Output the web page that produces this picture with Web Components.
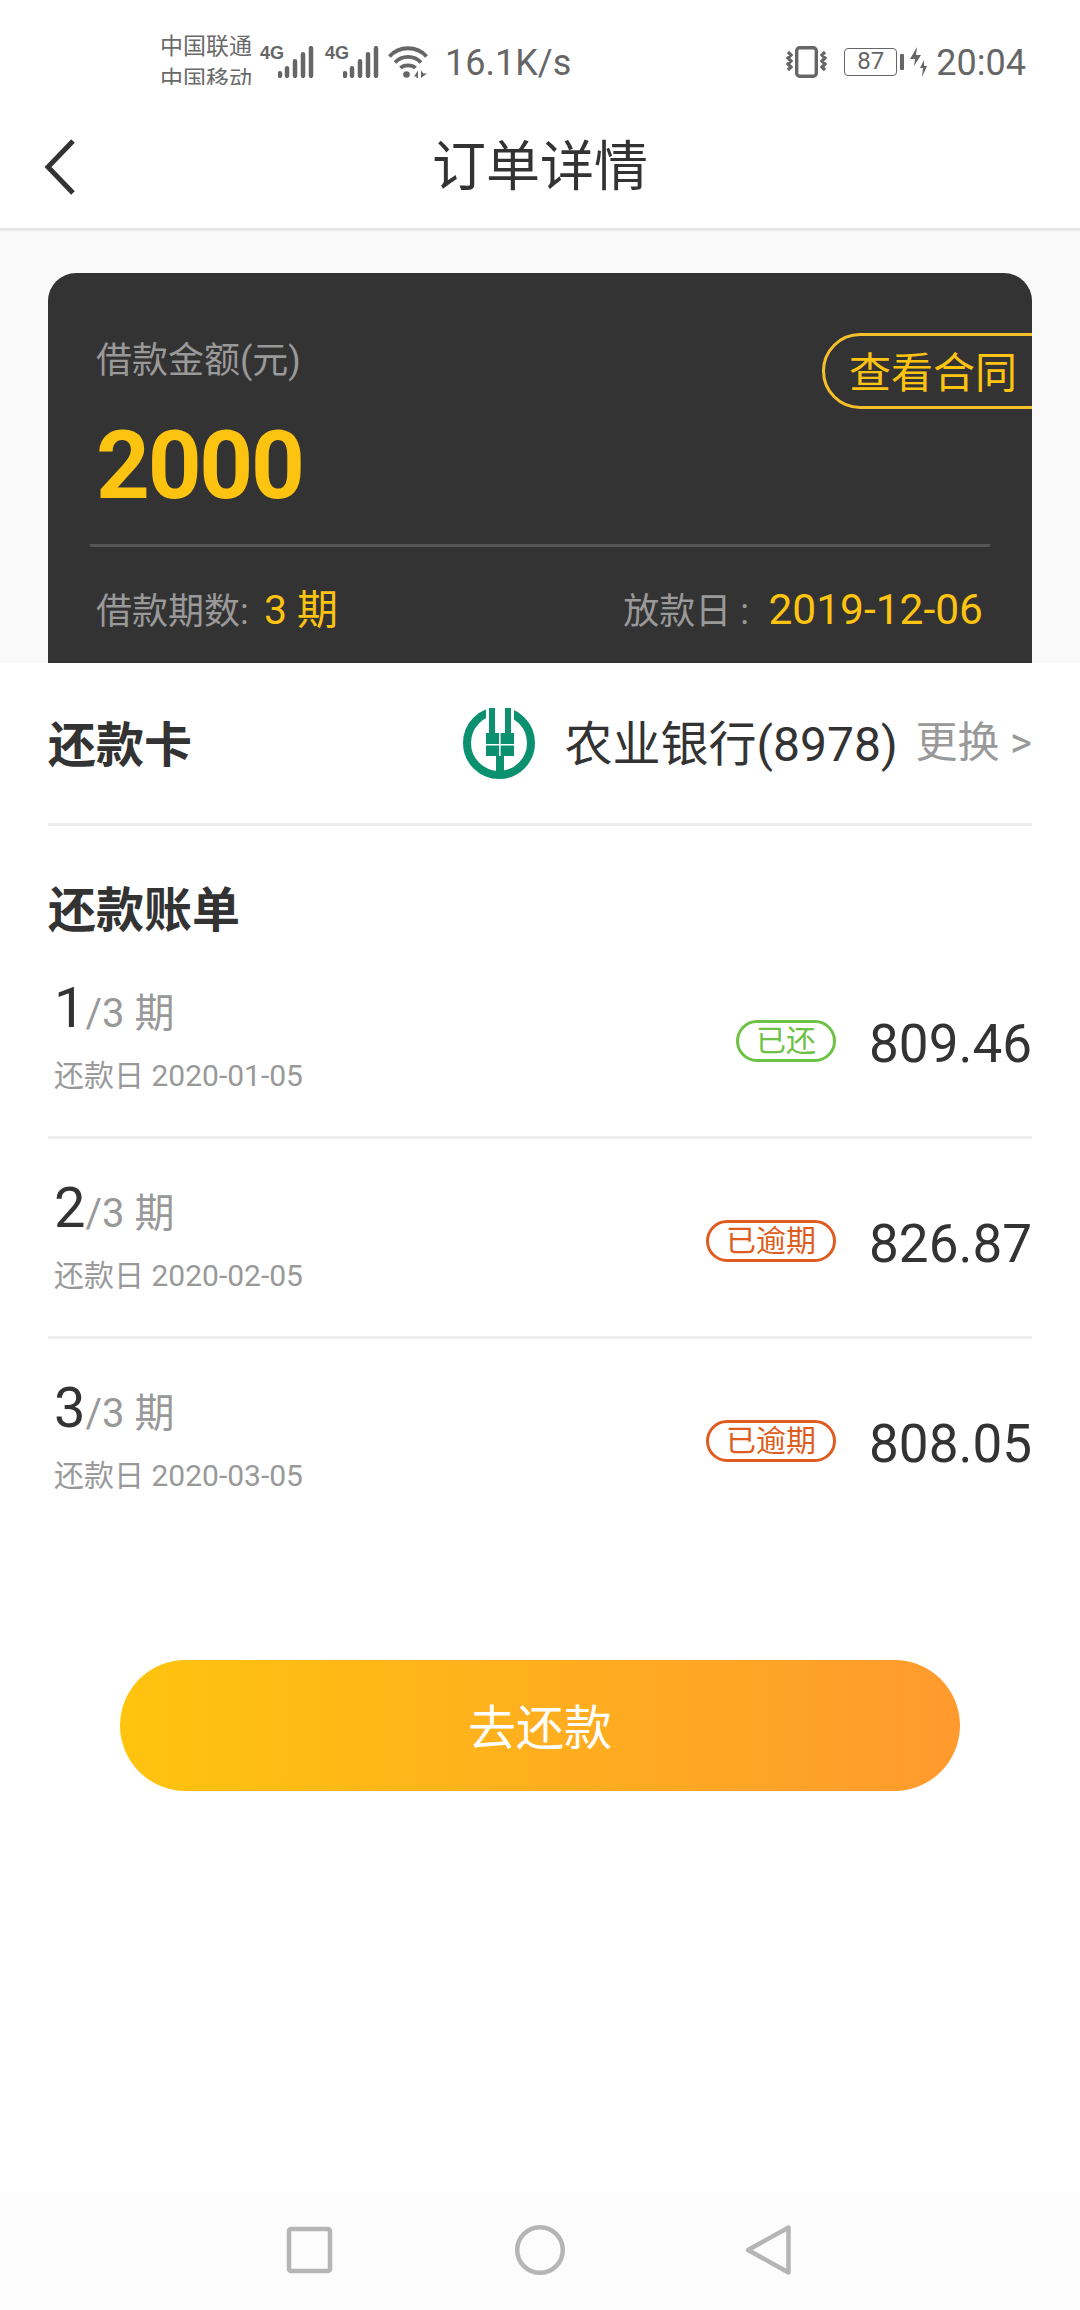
<!DOCTYPE html>
<html lang="zh"><head><meta charset="utf-8">
<style>
html,body{margin:0;padding:0;height:2310px;overflow:hidden;background:#fff}
body{font-family:Roboto,"Noto Sans CJK SC",sans-serif}
</style></head><body>
<x-app>
  <x-status-bar slot="top"></x-status-bar>
  <x-nav-bar title="订单详情"></x-nav-bar>
  <x-loan-card></x-loan-card>
  <x-sheet>
    <x-card-row></x-card-row>
    <x-section-title>还款账单</x-section-title>
    <x-bill-row n="1" date="2020-01-05" status="已还" tone="green" amount="809.46"></x-bill-row>
    <x-bill-row n="2" date="2020-02-05" status="已逾期" tone="red" amount="826.87"></x-bill-row>
    <x-bill-row n="3" date="2020-03-05" status="已逾期" tone="red" amount="808.05" last></x-bill-row>
    <x-pay-button>去还款</x-pay-button>
  </x-sheet>
  <x-sys-nav></x-sys-nav>
</x-app>
<script>
const def=(name,css,html)=>customElements.define(name,class extends HTMLElement{
  constructor(){super();this.attachShadow({mode:'open'});}
  connectedCallback(){
    const h=typeof html==='function'?html(this):html;
    this.shadowRoot.innerHTML='<style>'+css+'</style>'+h;
  }
});
const FONT='Roboto,"Noto Sans CJK SC",sans-serif';

def('x-app',`:host{display:flex;flex-direction:column;width:1080px;height:2310px;background:#fff;font-family:${FONT}}`,`<slot name="top"></slot><slot></slot>`);

const bars=`<path d="M2 27.300v2.500M9 22.200v7.600M17 15.200v14.600M25 8.200v21.600M33 2.200v27.600" fill="none" stroke="#666" stroke-width="4.500" stroke-linecap="round"/>`;
const signal=()=>`<span class="sig"><b>4G</b><svg width="36" height="32" viewBox="0 0 36 32">${bars}</svg></span>`;
def('x-status-bar',`
:host{display:flex;align-items:center;height:85px;box-sizing:border-box;padding:40px 54px 0 160px;color:#666;flex:none}
.car{font-size:23px;line-height:33px;width:100px;flex:none;color:#6a6a6a}
.car div{white-space:nowrap}
.sig{display:block;height:32px;width:65px;flex:none;position:relative;margin-top:-2px}
.sig b{font-size:18px;line-height:14px;font-weight:700;position:absolute;left:0;top:0;font-family:"Liberation Sans Narrow","Liberation Sans",sans-serif}
.sig svg{position:absolute;left:18px;top:0}
.wifi{flex:none;margin-left:-2px;margin-top:-2px}
.sp{font-size:36px;margin-left:17px;flex:none}
.r{margin-left:auto;display:flex;align-items:center}
.r svg,.bat,.nub{margin-top:-2px}
.bat{box-sizing:border-box;width:53px;height:28px;border:1.500px solid #666;border-radius:4px;font-size:24px;line-height:25px;text-align:center;margin-left:17px}
.nub{width:4px;height:16px;background:#666;border-radius:1px;margin-left:3px}
.t{font-size:36px;margin-left:9px}
`,`<div class="car"><div>中国联通</div><div>中国移动</div></div>
${signal()}${signal()}
<svg class="wifi" width="40" height="32" viewBox="0 0 40 32"><path d="M1.500 10.500C11 -0.500 29 -0.500 38.500 10.500M7 16.500C14 9 26 9 33 16.500M12.500 22C16 18.500 24 18.500 27.500 22" fill="none" stroke="#666" stroke-width="3.800"/><circle cx="18.500" cy="28.500" r="3.300" fill="#666"/><path d="M26 30.500l4-6v7.500h-1.500v-1.500zM33 24.500v7.500l6-4.500h-3.500z" fill="#666"/></svg>
<span class="sp">16.1K/s</span>
<div class="r">
<svg width="41" height="32" viewBox="0 0 41 32"><rect x="10.700" y="1.700" width="19.600" height="28.600" rx="3" fill="none" stroke="#666" stroke-width="3.400"/><path d="M2 6l3 3-3 3 3 3-3 3 3 3-3 3M39 6l-3 3 3 3-3 3 3 3-3 3 3 3" fill="none" stroke="#666" stroke-width="3.200"/></svg>
<span class="bat">87</span><span class="nub"></span>
<svg style="margin-left:5px" width="18" height="30" viewBox="0 0 18 30"><path d="M8 0L1 12h5l-1 7 7-11H7zM15 13l-4 8h3l-1 9 5-11h-3z" fill="#666"/></svg>
<span class="t">20:04</span></div>`);

def('x-nav-bar',`
:host{display:flex;align-items:center;justify-content:center;height:146px;box-sizing:border-box;border-bottom:3px solid #e6e6e6;position:relative;flex:none;background:#fff}
svg{position:absolute;left:44px;top:54px}
h1{margin:0;font-weight:400;font-size:54px;color:#333;line-height:100px;margin-top:23px}
`,el=>`<svg width="32" height="56" viewBox="0 0 32 56"><path d="M29 2L4 28l25 26" fill="none" stroke="#333" stroke-width="5"/></svg><h1>${el.getAttribute('title')}</h1>`);

def('x-loan-card',`
:host{display:block;height:432px;flex:none;box-sizing:border-box;background:#f9f9f9;padding:42px 48px 0;overflow:hidden}
.c{background:#333;border-radius:28px 28px 0 0;height:430px;box-sizing:border-box;padding:63px 42px 0 48px;position:relative;overflow:hidden}
.lbl{font-size:36px;line-height:50px;color:#999}
.amt{font-size:94px;letter-spacing:-2.300px;font-weight:700;color:#fdc311;line-height:106px;margin-top:27px;height:106px}
.pill{position:absolute;right:-40px;top:60px;box-sizing:border-box;width:250px;height:76px;border:3px solid #f5c02a;border-radius:38px;padding-left:24px;color:#fdc311;font-size:42px;line-height:76px}
hr{border:0;height:3px;background:#555;margin:25px 0 0 -6px;width:900px}
.b{display:flex;justify-content:space-between;font-size:36px;line-height:50px;height:50px;color:#999;margin-top:40px;padding-right:7px}
.y{color:#fdc311;font-size:41px;line-height:1;margin-left:5px}
.y.d{font-size:42.500px;margin-left:9px}
`,`<div class="c"><div class="lbl">借款金额(元)</div><div class="amt">2000</div><span class="pill">查看合同</span><hr>
<div class="b"><span>借款期数:<span class="y"> 3 期</span></span><span>放款日 :<span class="y d"> 2019-12-06</span></span></div></div>`);

def('x-sheet',`:host{display:flex;flex-direction:column;flex:1;min-height:0;background:#fff;padding:0 48px;box-sizing:border-box}`,`<slot></slot>`);

def('x-card-row',`
:host{display:flex;align-items:center;height:163px;box-sizing:border-box;border-bottom:3px solid #eee;flex:none}
strong{font-size:48px;color:#333;font-weight:700;margin-top:-4px}
svg{margin-left:auto}
.bk{font-size:48px;color:#333;margin-left:30px;line-height:60px;margin-top:4px}
.ch{font-size:42px;color:#999;margin-left:18px;margin-top:0;line-height:50px;white-space:nowrap}
`,`<strong>还款卡</strong>
<svg width="72" height="72" viewBox="0 0 72 72"><circle cx="36" cy="36" r="32" fill="none" stroke="#0c9170" stroke-width="8"/><rect x="23" y="0" width="28" height="28" fill="#fff"/><path d="M26 1h6v25h10V1h6v25h3v23H41v19h-8V49H23V26h3z" fill="#0c9170"/><path d="M23 37h28v1.600H23zM36 26h1.600v23H36z" fill="#fff"/></svg>
<span class="bk">农业银行(8978)</span><span class="ch">更换 &gt;</span>`);

def('x-section-title',`:host{display:block;font-size:48px;font-weight:700;color:#333;line-height:56px;padding-top:57px;flex:none}`,`<slot></slot>`);

def('x-bill-row',`
:host{display:flex;height:200px;box-sizing:border-box;border-bottom:3px solid #eee;align-items:flex-start;position:relative;flex:none;padding-left:6px}
:host([last]){border-bottom:0}
.top{line-height:72px;height:72px;color:#999;font-size:40px;margin-top:33px}
.top i{font-style:normal;color:#333;font-size:56px}
.d{font-size:30px;color:#999;line-height:40px;margin-top:12px}
.r{margin-left:auto;display:flex;align-items:center;margin-top:65px;height:80px}
.tag{box-sizing:border-box;height:42px;border:3px solid;border-radius:21px;font-size:30px;line-height:36px;padding:0 17px;margin-right:33px;margin-bottom:6px}
.green{color:#6dc144;border-color:#6dc144}
.red{color:#de5c20;border-color:#de5c20}
.a{font-size:53px;color:#333;line-height:60px}
`,el=>`<div class="l"><div class="top"><i>${el.getAttribute('n')}</i>/3 期</div><div class="d">还款日 ${el.getAttribute('date')}</div></div>
<div class="r"><span class="tag ${el.getAttribute('tone')}">${el.getAttribute('status')}</span><span class="a">${el.getAttribute('amount')}</span></div>`);

def('x-pay-button',`
:host{display:flex;align-items:center;justify-content:center;flex:none;height:131px;box-sizing:border-box;padding-bottom:4px;margin:121px 72px 0;border-radius:66px;background:linear-gradient(90deg,#ffc40e,#ff9a2e);color:#fff;font-size:48px}
`,`<slot></slot>`);

def('x-sys-nav',`
:host{display:block;height:118px;flex:none;background:#fcfcfc;position:relative}
.w{display:flex;height:100%;align-items:center;padding-left:285px;gap:0;margin-top:-1px}
`,`<div class="w">
<svg width="48" height="48" viewBox="0 0 48 48"><rect x="4" y="3" width="41" height="42" rx="2" fill="none" stroke="#b5b5b5" stroke-width="4.500"/></svg>
<svg style="margin-left:181px" width="52" height="52" viewBox="0 0 52 52"><circle cx="26" cy="26" r="22.800" fill="none" stroke="#b5b5b5" stroke-width="4.500"/></svg>
<svg style="margin-left:178px" width="48" height="54" viewBox="0 0 48 54"><path d="M44.500 4.500v45L4 27z" fill="none" stroke="#b5b5b5" stroke-width="4.500" stroke-linejoin="round"/></svg>
</div>`);
</script>
</body></html>
